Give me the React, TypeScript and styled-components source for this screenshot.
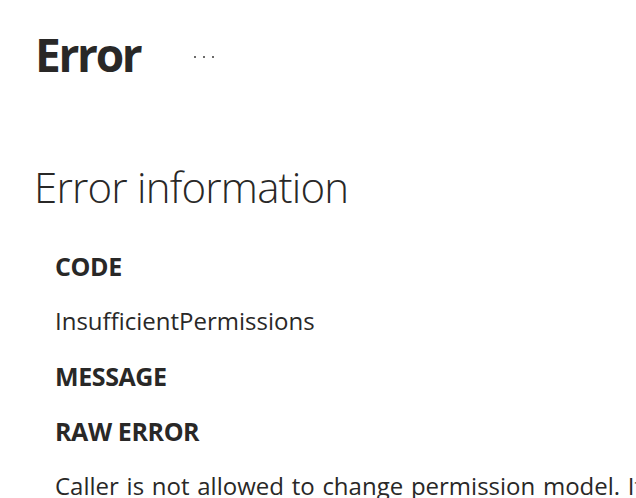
import React, { FunctionComponent, ReactNode } from 'react'
import styled, { createGlobalStyle } from 'styled-components'

const GlobalStyle = createGlobalStyle`
  html, body {
    margin: 0;
    padding: 0;
    background: #ffffff;
    overflow: hidden;
  }
  body {
    font-family: "Open Sans", "Noto Sans", sans-serif;
    color: #292827;
  }
`

const Page = styled.main`
  padding: 26px 0 0 35px;
  width: 636px;
  height: 498px;
  box-sizing: border-box;
  overflow: hidden;
`

const Header = styled.header`
  display: flex;
  align-items: flex-start;
`

const Title = styled.h1`
  margin: 0;
  font-size: 46px;
  line-height: 56px;
  font-weight: 700;
  letter-spacing: -2.3px;
`

const MoreButton = styled.button`
  border: 0;
  background: none;
  padding: 0;
  margin: 30px 0 0 54px;
  display: flex;
  gap: 7px;
  cursor: pointer;
`

const Dot = styled.span`
  width: 2px;
  height: 2px;
  background: #3b3a39;
  border-radius: 50%;
`

const SectionTitle = styled.h2`
  margin: 79px 0 0 -1px;
  font-size: 42px;
  line-height: 52px;
  font-weight: 300;
  letter-spacing: -0.8px;
`

const Fields = styled.dl`
  margin: 37px 0 0 20px;
  display: flex;
  flex-direction: column;
  gap: 23px;
`

const Label = styled.dt`
  font-size: 25px;
  line-height: 32px;
  font-weight: 700;
  letter-spacing: -0.4px;
`

const Value = styled.dd`
  margin: 0;
  font-size: 24px;
  line-height: 32px;
  font-weight: 400;
  white-space: nowrap;
  letter-spacing: 0;
  word-spacing: 1.5px;
`

const Field: FunctionComponent<FieldProps> = ({ label, children }) => (
  <>
    <Label>{label}</Label>
    {children ? <Value>{children}</Value> : null}
  </>
)

const App: FunctionComponent = () => (
  <>
    <GlobalStyle />
    <Page>
      <Header>
        <Title>Error</Title>
        <MoreButton aria-label="More">
          <Dot />
          <Dot />
          <Dot />
        </MoreButton>
      </Header>
      <SectionTitle>Error information</SectionTitle>
      <Fields>
        <Field label="CODE">InsufficientPermissions</Field>
        <Field label="MESSAGE" />
        <Field label="RAW ERROR">
          Caller is not allowed to change permission model. If this is unexpected, please contact your administrator.
        </Field>
      </Fields>
    </Page>
  </>
)

interface FieldProps {
  label: string
  children?: ReactNode
}

export default App
